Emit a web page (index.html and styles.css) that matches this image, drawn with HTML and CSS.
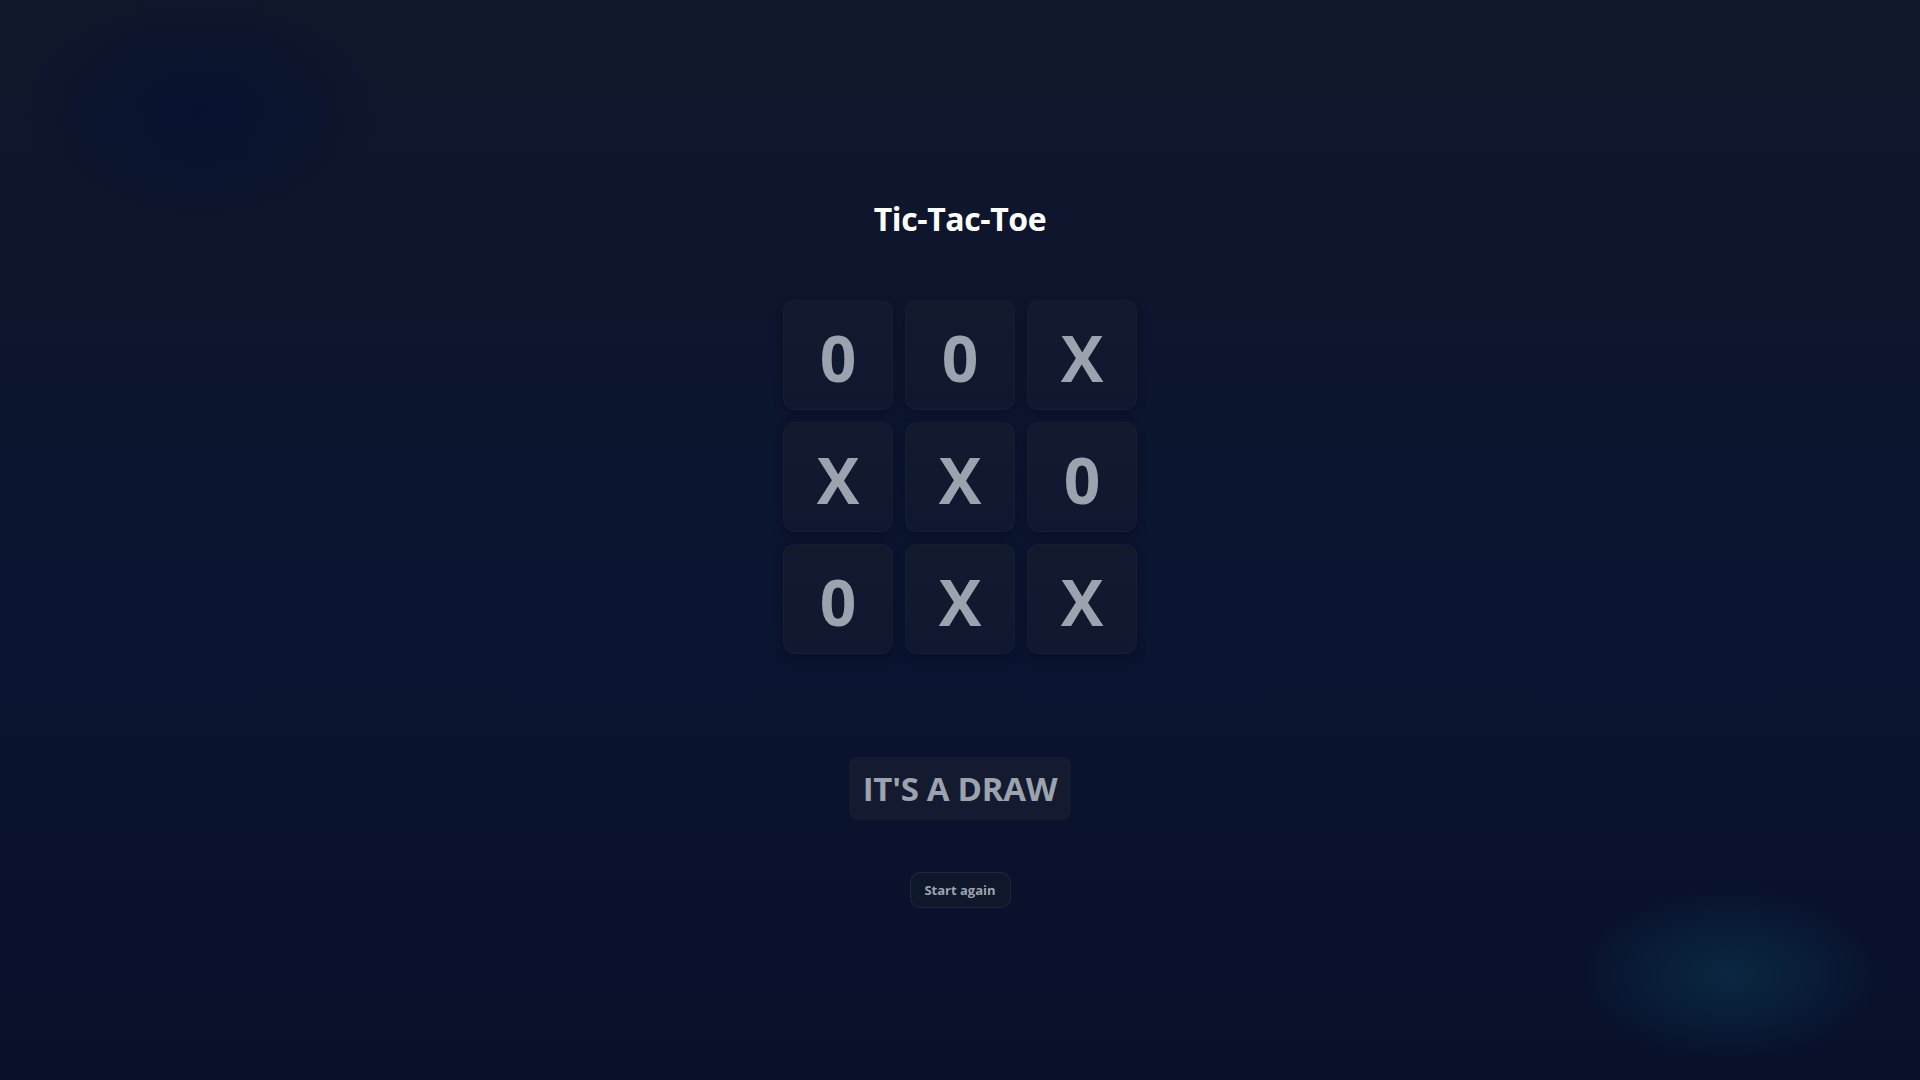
FILE: index.html
```html
<!DOCTYPE html>
<html lang="en">
<head>
<meta charset="utf-8">
<title>Tic-Tac-Toe</title>
<link rel="stylesheet" href="styles.css">
</head>
<body>
<div class="blob blob-tl"></div>
<div class="blob blob-br"></div>
<main class="game">
  <h1 class="title">Tic-Tac-Toe</h1>
  <div class="board">
    <div class="cell">0</div>
    <div class="cell">0</div>
    <div class="cell">X</div>
    <div class="cell">X</div>
    <div class="cell">X</div>
    <div class="cell">0</div>
    <div class="cell">0</div>
    <div class="cell">X</div>
    <div class="cell">X</div>
  </div>
  <div class="result">IT'S A DRAW</div>
  <button class="restart">Start again</button>
</main>
</body>
</html>
```
FILE: styles.css
```css
* { box-sizing: border-box; }
html, body { margin: 0; padding: 0; height: 100%; }
body {
  min-height: 100vh;
  background: linear-gradient(180deg, #0f172a 0%, #0b1430 55%, #08102a 100%);
  font-family: "Open Sans", "Noto Sans", sans-serif;
  color: #fff;
  overflow: hidden;
  position: relative;
}
.blob {
  position: absolute;
  border-radius: 50%;
  pointer-events: none;
}
.blob-tl {
  left: 20px; top: -10px;
  width: 360px; height: 240px;
  background: radial-gradient(ellipse at center, rgba(5,16,48,0.7) 0%, rgba(5,16,48,0.4) 40%, rgba(5,16,48,0) 70%);
}
.blob-br {
  left: 1580px; top: 890px;
  width: 300px; height: 170px;
  background: radial-gradient(ellipse at center, rgba(10,45,70,0.8) 0%, rgba(10,40,65,0.4) 45%, rgba(10,40,65,0) 72%);
}
.game {
  position: relative;
  display: flex;
  flex-direction: column;
  align-items: center;
  padding-top: 197px;
}
.title {
  margin: 0;
  font-size: 32px;
  line-height: 44px;
  font-weight: 700;
  letter-spacing: -0.4px;
  color: #ffffff;
}
.board {
  margin-top: 59px;
  display: grid;
  grid-template-columns: repeat(3, 110px);
  grid-auto-rows: 110px;
  gap: 12px;
}
.cell {
  display: flex;
  align-items: center;
  justify-content: center;
  background: linear-gradient(180deg, #121a2e 0%, #0f1830 100%);
  border: 1px solid rgba(255,255,255,0.025);
  border-radius: 12px;
  box-shadow: 0 4px 10px rgba(0,0,0,0.25);
  color: #9ca3af;
  font-size: 64px;
  font-weight: 700;
  line-height: 1;
  padding-top: 6px;
}
.result {
  margin-top: 103px;
  height: 63px;
  padding: 0 14px;
  display: flex;
  align-items: center;
  background: #141b30;
  border-radius: 8px;
  color: #9ca3af;
  font-size: 33px;
  font-weight: 700;
  letter-spacing: -0.3px;
}
.restart {
  margin-top: 52px;
  width: 101px;
  height: 36px;
  background: #0f172b;
  border: 1px solid rgba(255,255,255,0.07);
  border-radius: 10px;
  color: #9ca3af;
  font-family: "Open Sans", "Noto Sans", sans-serif;
  font-size: 13px;
  font-weight: 700;
  padding: 0;
}
```
